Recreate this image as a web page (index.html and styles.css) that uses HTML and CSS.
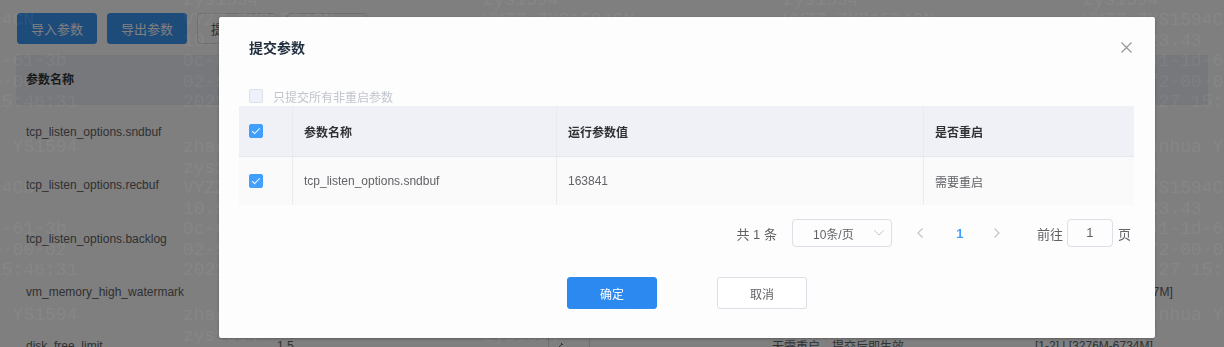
FILE: index.html
```html
<!DOCTYPE html>
<html lang="zh-CN">
<head>
    <meta charset="UTF-8">
    <meta name="viewport" content="width=device-width, initial-scale=1.0">
    <title>参数管理</title>
    <link rel="stylesheet" href="styles.css">
</head>
<body>

    <div class="page">
        <div class="toolbar">
            <button class="btn btn-primary">导入参数</button>
            <button class="btn btn-primary">导出参数</button>
            <button class="btn btn-plain">提交参数</button>
            <button class="btn btn-plain">刷新</button>
        </div>

        <div class="param-table">
            <div class="param-row param-head">
                <span>参数名称</span>
                <span>运行参数值</span>
                <span>修改值</span>
                <span>是否重启</span>
                <span>取值范围</span>
            </div>
            <div class="param-row">
                <span>tcp_listen_options.sndbuf</span>
                <span>163841</span>
                <span><i class="edit-box"></i></span>
                <span>需要重启</span>
                <span>[1-2147483647]</span>
            </div>
            <div class="param-row">
                <span>tcp_listen_options.recbuf</span>
                <span>163841</span>
                <span><i class="edit-box"></i></span>
                <span>需要重启</span>
                <span>[1-2147483647]</span>
            </div>
            <div class="param-row">
                <span>tcp_listen_options.backlog</span>
                <span>4096</span>
                <span><i class="edit-box"></i></span>
                <span>需要重启</span>
                <span>[1-65535]</span>
            </div>
            <div class="param-row">
                <span>vm_memory_high_watermark</span>
                <span>0.4</span>
                <span><i class="edit-box"></i></span>
                <span>无需重启，提交后即生效</span>
                <span>[0.4-0.8] | [2620M-5567M]</span>
            </div>
            <div class="param-row">
                <span>disk_free_limit</span>
                <span>1.5</span>
                <span><i class="edit-box">
                    <svg width="10" height="10" viewBox="0 0 10 10"><path d="M2 8 L7 3 M6 2 L8 4" stroke="#606266" stroke-width="1" fill="none"/></svg>
                </i></span>
                <span>无需重启，提交后即生效</span>
                <span>[1-2] | [3276M-6734M]</span>
            </div>
        </div>
    </div>

    <div class="mask"></div>

    <div class="dialog">
        <div class="dialog-header">
            <span class="dialog-title">提交参数</span>
            <span class="dialog-close">
                <svg width="11" height="11" viewBox="0 0 11 11"><path d="M0.5 0.5 L10.5 10.5 M10.5 0.5 L0.5 10.5" stroke="#909399" stroke-width="1.1" fill="none"/></svg>
            </span>
        </div>

        <div class="dialog-body">
            <label class="only-restart">
                <span class="checkbox disabled"></span>
                <span>只提交所有非重启参数</span>
            </label>

            <div class="sub-table">
                <div class="sub-row sub-head">
                    <span class="cell cell-check"><span class="checkbox checked"></span></span>
                    <span class="cell">参数名称</span>
                    <span class="cell">运行参数值</span>
                    <span class="cell">是否重启</span>
                </div>
                <div class="sub-row sub-data">
                    <span class="cell cell-check"><span class="checkbox checked"></span></span>
                    <span class="cell">tcp_listen_options.sndbuf</span>
                    <span class="cell">163841</span>
                    <span class="cell">需要重启</span>
                </div>
            </div>

            <div class="pagination">
                <span class="total">共 1 条</span>
                <span class="page-size">
                    <span>10条/页</span>
                    <svg width="10" height="6" viewBox="0 0 10 6"><path d="M0.5 0.5 L5 5 L9.5 0.5" stroke="#c0c4cc" stroke-width="1" fill="none"/></svg>
                </span>
                <span class="page-btn prev">
                    <svg width="6" height="10" viewBox="0 0 6 10"><path d="M5.5 0.5 L1 5 L5.5 9.5" stroke="#c0c4cc" stroke-width="1.2" fill="none"/></svg>
                </span>
                <span class="pager">1</span>
                <span class="page-btn next">
                    <svg width="6" height="10" viewBox="0 0 6 10"><path d="M0.5 0.5 L5 5 L0.5 9.5" stroke="#c0c4cc" stroke-width="1.2" fill="none"/></svg>
                </span>
                <span class="jump">前往</span>
                <span class="jump-input">1</span>
                <span class="jump-unit">页</span>
            </div>
        </div>

        <div class="dialog-footer">
            <button class="btn-confirm">确定</button>
            <button class="btn-cancel">取消</button>
        </div>
    </div>

    <div class="watermark"><div class="wm-grid" id="wm-grid"></div></div>

    <script>
        // repeat the user watermark over the whole screen
        var wmLines = [
            "zhaozhenhua YS1594",
            "zys1594",
            "VYZZ-ZYS1594CN",
            "10.51.23.43",
            "0c-da-41-1d-61-3b",
            "02-50-f2-00-00-02",
            "2021-5-27 15:46:31"
        ];
        var grid = document.getElementById("wm-grid");
        for (var i = 0; i < 15; i++) {
            var block = document.createElement("div");
            block.className = "wm-block";
            block.textContent = wmLines.join("\n");
            grid.appendChild(block);
        }
    </script>

</body>
</html>
```

FILE: styles.css
```css
:root {
    --primary: #409eff;
    --text-main: #303133;
    --text-regular: #606266;
    --text-muted: #c0c4cc;
    --border: #dcdfe6;
}

* {
    margin: 0;
    padding: 0;
    box-sizing: border-box;
}

html, body {
    height: 100%;
    overflow: hidden;
}

body {
    font-family: "Liberation Sans", "Noto Sans CJK SC", sans-serif;
    font-size: 12px;
    color: var(--text-regular);
    background: #fff;
}

/* page behind the dialog */

.page {
    padding: 13px 16px 0;
}

.toolbar {
    display: flex;
    gap: 10px;
    padding-left: 1px;
    margin-bottom: 11px;
}

.btn {
    width: 80px;
    height: 31px;
    border-radius: 3px;
    font-family: inherit;
    font-size: 13px;
}

.btn-primary {
    background: #3a96f5;
    border: 1px solid #3a96f5;
    color: #fff;
}

.btn-plain {
    background: #fff;
    border: 1px solid var(--border);
    color: var(--text-regular);
}

.param-row {
    display: grid;
    grid-template-columns: 251px 281px 214px 263px 1fr;
    align-items: center;
    height: 53.5px;
}

.param-row span {
    padding-left: 10px;
    white-space: nowrap;
}

.param-head {
    height: 50px;
    padding-bottom: 4px;
    background: #eef0f6;
    color: var(--text-main);
    font-weight: 700;
}

.edit-box {
    display: flex;
    align-items: center;
    width: 42px;
    height: 28px;
    margin-left: -10px;
    padding-left: 6px;
    border: 1px solid var(--border);
}

.mask {
    position: fixed;
    inset: 0;
    background: rgba(0, 0, 0, 0.5);
}

/* dialog */

.dialog {
    position: fixed;
    left: 219px;
    top: 17px;
    width: 936px;
    background: #fdfdfd;
    border-radius: 2px;
    box-shadow: 0 1px 3px rgba(0, 0, 0, 0.3);
}

.dialog-header {
    position: relative;
    padding: 21px 30px 28px;
}

.dialog-title {
    display: block;
    font-size: 14px;
    line-height: 20px;
    font-weight: 700;
    color: #1f2d3d;
}

.dialog-close {
    position: absolute;
    top: 25px;
    right: 23px;
    display: flex;
}

.dialog-body {
    padding: 0 21px 0 20px;
}

.only-restart {
    display: flex;
    align-items: center;
    gap: 10px;
    height: 20px;
    padding-left: 10px;
    color: var(--text-muted);
}

.checkbox {
    position: relative;
    display: inline-block;
    width: 14px;
    height: 14px;
    border-radius: 2px;
    border: 1px solid var(--border);
    background: #fff;
}

.checkbox.disabled {
    background: #edf2fc;
}

.checkbox.checked {
    background: var(--primary);
    border-color: var(--primary);
}

.checkbox.checked::after {
    content: "";
    position: absolute;
    left: 4px;
    top: 1px;
    width: 3px;
    height: 7px;
    border: 1px solid #fff;
    border-left: 0;
    border-top: 0;
    transform: rotate(45deg);
    box-sizing: content-box;
}

.sub-row {
    display: grid;
    grid-template-columns: 54px 264px 367px 1fr;
}

.sub-row .cell {
    display: flex;
    align-items: center;
    padding-left: 11px;
    border-right: 1px solid #e9ebf0;
}

.sub-row .cell:last-child {
    border-right: 0;
}

.sub-row .cell-check {
    padding-left: 10px;
}

.sub-head {
    height: 51px;
    background: #f0f1f6;
    border-bottom: 1px solid #e4e7ed;
    color: var(--text-main);
    font-weight: 700;
}

.sub-data {
    height: 48px;
    background: #fafafa;
}

.pagination {
    display: flex;
    align-items: center;
    justify-content: flex-end;
    height: 28px;
    margin-top: 14px;
    padding-right: 3px;
    font-size: 13px;
    color: var(--text-regular);
}

.page-size {
    display: flex;
    align-items: center;
    justify-content: space-between;
    width: 100px;
    height: 28px;
    margin-left: 15px;
    padding: 0 7px 0 20px;
    border: 1px solid var(--border);
    border-radius: 4px;
    font-size: 12px;
}

.page-btn {
    display: flex;
    align-items: center;
    justify-content: center;
    width: 30px;
    height: 28px;
}

.prev {
    margin-left: 13px;
}

.pager {
    width: 30px;
    margin: 0 7px 0 10px;
    text-align: center;
    color: var(--primary);
    font-weight: 700;
}

.jump {
    margin-left: 25px;
}

.jump-input {
    width: 46px;
    height: 28px;
    margin: 0 5px 0 4px;
    line-height: 26px;
    text-align: center;
    border: 1px solid var(--border);
    border-radius: 4px;
}

.dialog-footer {
    display: flex;
    justify-content: center;
    gap: 60px;
    padding: 30px 0 29px;
}

.btn-confirm,
.btn-cancel {
    width: 90px;
    height: 32px;
    border-radius: 3px;
    font-family: inherit;
    font-size: 12px;
}

.btn-confirm {
    background: #2b89f0;
    border: 1px solid #2b89f0;
    color: #fff;
}

.btn-cancel {
    background: #fff;
    border: 1px solid var(--border);
    color: var(--text-regular);
}

/* watermark on top of everything */

.watermark {
    position: fixed;
    inset: 0;
    overflow: hidden;
    pointer-events: none;
}

.wm-grid {
    display: grid;
    grid-template-columns: repeat(5, 300px);
    grid-auto-rows: 168px;
    margin: -31px 0 0 -117px;
}

.wm-block {
    white-space: pre;
    font-family: "Liberation Mono", monospace;
    font-size: 18px;
    line-height: 20.5px;
    color: rgba(255, 255, 255, 0.05);
}
```
